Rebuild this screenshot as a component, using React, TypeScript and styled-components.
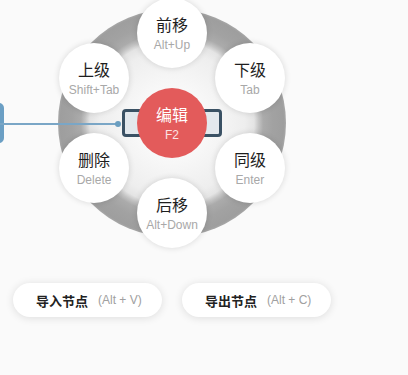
import styled, { createGlobalStyle } from 'styled-components';

const GlobalStyle = createGlobalStyle`
  html, body {
    margin: 0;
    padding: 0;
    background: #fafafa;
    font-family: "Liberation Sans", "Noto Sans CJK SC", sans-serif;
  }
`;

const CX = 172;
const CY = 123;
const DIST = 90;

const items = [
  { label: '前移', key: 'Alt+Up', angle: -90 },
  { label: '下级', key: 'Tab', angle: -30 },
  { label: '同级', key: 'Enter', angle: 30 },
  { label: '后移', key: 'Alt+Down', angle: 90 },
  { label: '删除', key: 'Delete', angle: 150 },
  { label: '上级', key: 'Shift+Tab', angle: 210 },
];

const actions = [
  { label: '导入节点', key: '(Alt + V)' },
  { label: '导出节点', key: '(Alt + C)' },
];

const App = () => {
  return (
    <Page>
      <GlobalStyle />
      <Canvas>
        <ParentNode />
        <Ring />
        <Edge />
        <CurrentNode />
        <EdgeDot />
        {items.map(({ label, key, angle }) => {
          const rad = (angle * Math.PI) / 180;
          return (
            <MenuItem
              key={label}
              style={{
                left: CX + DIST * Math.cos(rad) - 35,
                top: CY + DIST * Math.sin(rad) - 35,
              }}
            >
              <Label>{label}</Label>
              <Key>{key}</Key>
            </MenuItem>
          );
        })}
        <MenuItem $primary style={{ left: CX - 35, top: CY - 35 }}>
          <Label $primary>编辑</Label>
          <Key $primary>F2</Key>
        </MenuItem>
      </Canvas>
      <Toolbar>
        {actions.map(({ label, key }) => (
          <ActionButton key={label}>
            <ActionLabel>{label}</ActionLabel>
            <ActionKey>{key}</ActionKey>
          </ActionButton>
        ))}
      </Toolbar>
    </Page>
  );
};

export default App;

const Page = styled.div`
  height: 100vh;
  overflow: hidden;
  display: flex;
  flex-direction: column;
`;

const Canvas = styled.div`
  position: relative;
  height: 283px;
  flex-shrink: 0;
`;

const ParentNode = styled.div`
  position: absolute;
  left: -10px;
  top: 103px;
  width: 14px;
  height: 40px;
  border-radius: 5px;
  background: #6b9fc4;
`;

const Ring = styled.div`
  position: absolute;
  left: ${CX - 114}px;
  top: ${CY - 114}px;
  width: 228px;
  height: 228px;
  border-radius: 50%;
  background: radial-gradient(
    circle closest-side,
    #ffffff 0%,
    #f7f7f7 35%,
    #eeeeee 64%,
    #e4e4e4 72%,
    #c4c4c4 76%,
    #ababab 80%,
    #a2a2a2 88%,
    #9e9e9e 98%,
    #a8a8a8 100%
  );
`;

const Edge = styled.div`
  position: absolute;
  left: 0;
  top: ${CY}px;
  width: 118px;
  height: 1.5px;
  background: #7aa6c6;
`;

const EdgeDot = styled.div`
  position: absolute;
  left: 115px;
  top: ${CY - 2.5}px;
  width: 6px;
  height: 6px;
  border-radius: 50%;
  background: #6a9ec0;
`;

const CurrentNode = styled.div`
  position: absolute;
  left: 122px;
  top: 109px;
  width: 100px;
  height: 28px;
  box-sizing: border-box;
  border: 3px solid #3a5164;
  border-radius: 4px;
  background: #e3e8ed;
`;

const MenuItem = styled.div<{ $primary?: boolean }>`
  position: absolute;
  width: 70px;
  height: 70px;
  border-radius: 50%;
  background: ${(p) => (p.$primary ? '#e35b5b' : '#ffffff')};
  box-shadow: ${(p) => (p.$primary ? 'none' : '0 0 6px rgba(0, 0, 0, 0.14)')};
  display: flex;
  flex-direction: column;
  align-items: center;
  justify-content: center;
  gap: 2px;
  padding-top: 2px;
  box-sizing: border-box;
`;

const Label = styled.span<{ $primary?: boolean }>`
  font-size: 16px;
  line-height: 20px;
  color: ${(p) => (p.$primary ? '#ffffff' : '#1e1e1e')};
`;

const Key = styled.span<{ $primary?: boolean }>`
  font-size: 12px;
  line-height: 14px;
  color: ${(p) => (p.$primary ? '#fbe3e3' : '#a8a8a8')};
`;

const Toolbar = styled.div`
  display: flex;
  gap: 20px;
  padding-left: 13px;
`;

const ActionButton = styled.div`
  width: 149px;
  height: 34px;
  box-sizing: border-box;
  padding-left: 23px;
  border-radius: 17px;
  background: #ffffff;
  box-shadow: 0 1px 8px rgba(0, 0, 0, 0.12);
  display: flex;
  align-items: center;
  gap: 10px;
`;

const ActionLabel = styled.span`
  font-size: 13px;
  font-weight: bold;
  color: #222;
`;

const ActionKey = styled.span`
  font-size: 12px;
  color: #a0a0a0;
`;
